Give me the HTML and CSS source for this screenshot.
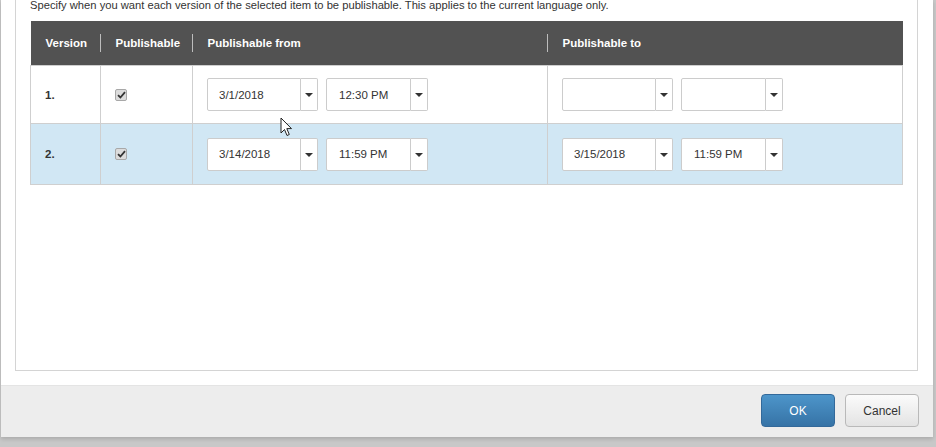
FILE: index.html
```html
<!DOCTYPE html>
<html lang="en">
<head>
    <meta charset="UTF-8">
    <title>Publishing restrictions</title>
    <link rel="stylesheet" href="styles.css">
</head>
<body>
<div class="dialog">
    <div class="dialog-body">
        <div class="panel">
            <p class="intro">Specify when you want each version of the selected item to be publishable. This applies to the current language only.</p>

            <table class="versions">
                <thead>
                <tr>
                    <th class="col-version">Version</th>
                    <th class="col-pub">Publishable</th>
                    <th class="col-from">Publishable from</th>
                    <th class="col-to">Publishable to</th>
                </tr>
                </thead>
                <tbody>
                <tr>
                    <td class="num">1.</td>
                    <td><span class="check"><svg width="9" height="8" viewBox="0 0 9 8"><path d="M1 4.2 L3.4 6.5 L8 1.2" fill="none" stroke="#333" stroke-width="1.8"/></svg></span></td>
                    <td>
                        <div class="pickers">
                            <div class="picker date"><span class="value">3/1/2018</span><span class="drop"></span></div>
                            <div class="picker time"><span class="value">12:30 PM</span><span class="drop"></span></div>
                        </div>
                    </td>
                    <td>
                        <div class="pickers">
                            <div class="picker date"><span class="value"></span><span class="drop"></span></div>
                            <div class="picker time"><span class="value"></span><span class="drop"></span></div>
                        </div>
                    </td>
                </tr>
                <tr class="selected">
                    <td class="num">2.</td>
                    <td><span class="check"><svg width="9" height="8" viewBox="0 0 9 8"><path d="M1 4.2 L3.4 6.5 L8 1.2" fill="none" stroke="#333" stroke-width="1.8"/></svg></span></td>
                    <td>
                        <div class="pickers">
                            <div class="picker date"><span class="value">3/14/2018</span><span class="drop"></span></div>
                            <div class="picker time"><span class="value">11:59 PM</span><span class="drop"></span></div>
                        </div>
                    </td>
                    <td>
                        <div class="pickers">
                            <div class="picker date"><span class="value">3/15/2018</span><span class="drop"></span></div>
                            <div class="picker time"><span class="value">11:59 PM</span><span class="drop"></span></div>
                        </div>
                    </td>
                </tr>
                </tbody>
            </table>
        </div>
    </div>

    <div class="dialog-footer">
        <button class="btn btn-primary">OK</button>
        <button class="btn">Cancel</button>
    </div>
</div>

<svg class="cursor" width="13" height="20" viewBox="0 0 13 20">
    <path d="M1 1 L1 16 L4.5 12.5 L7 18.5 L9.3 17.5 L6.8 11.6 L11.5 11.6 Z" fill="#fff" stroke="#222" stroke-width="1"/>
</svg>
</body>
</html>
```

FILE: styles.css
```css
body {
    margin: 0;
    background: #c8c8c8;
    font-family: 'Liberation Sans', Arial, sans-serif;
    color: #333;
    height: 447px;
    overflow: hidden;
    position: relative;
}

.dialog {
    margin-left: 1px;
    width: 932px;
    height: 437px;
    background: white;
    display: flex;
    flex-direction: column;
    box-shadow: 0 2px 4px rgba(0, 0, 0, 0.15);
}

.dialog-body {
    flex: 1;
    display: flex;
    padding: 0 15px 14px 14px;
}

.panel {
    flex: 1;
    border: 1px solid #d4d4d4;
    border-top: none;
    padding: 0 14px;
}

.intro {
    margin: -1px 0 0 0;
    font-size: 11.2px;
    line-height: 13px;
    color: #333;
}

.versions {
    margin-top: 9px;
    width: 873px;
    border-collapse: collapse;
    table-layout: fixed;
}

.versions th {
    background: #525252;
    color: white;
    height: 44px;
    padding: 0 0 0 15px;
    text-align: left;
    font-size: 11.5px;
    font-weight: bold;
    position: relative;
}

.versions th::after {
    content: "";
    position: absolute;
    right: 0;
    top: 13px;
    height: 18px;
    border-right: 1px solid #bdbdbd;
}

.versions th.col-to::after {
    display: none;
}

.col-version { width: 55px; }
.col-pub { width: 77px; }
.col-from { width: 340px; }

.versions td {
    border: 1px solid #cfcfcf;
    padding: 0 0 0 14px;
    height: 57px;
    font-size: 11.5px;
}

.versions tr.selected td {
    background: #d1e7f4;
    height: 60px;
}

.versions td.num {
    font-weight: bold;
}

.check {
    display: inline-flex;
    align-items: center;
    justify-content: center;
    width: 10px;
    height: 10px;
    border: 1px solid #a8a8a8;
    border-radius: 2px;
    background: #dcdcdc;
    vertical-align: middle;
}

.pickers {
    display: flex;
    gap: 8px;
}

.picker {
    display: flex;
    height: 33px;
}

.picker .value {
    box-sizing: border-box;
    display: flex;
    align-items: center;
    padding-left: 11px;
    background: white;
    border: 1px solid #cccccc;
    border-radius: 2px 0 0 2px;
    color: #333;
    font-size: 11.5px;
}

.picker.date .value { width: 94px; }
.picker.time .value { width: 85px; padding-left: 12px; }

.picker .drop {
    box-sizing: border-box;
    width: 17px;
    background: white;
    border: 1px solid #cccccc;
    border-left: none;
    border-radius: 0 2px 2px 0;
    position: relative;
}

.picker .drop::after {
    content: "";
    position: absolute;
    left: 4px;
    top: 14px;
    border-left: 4px solid transparent;
    border-right: 4px solid transparent;
    border-top: 4px solid #333;
}

.dialog-footer {
    height: 52px;
    box-sizing: border-box;
    background: #ededed;
    border-top: 1px solid #e4e4e4;
    display: flex;
    justify-content: flex-end;
    align-items: flex-start;
    gap: 10px;
    padding: 8px 14px 0 0;
}

.btn {
    width: 74px;
    height: 33px;
    border-radius: 4px;
    border: 1px solid #b9b9b9;
    background: linear-gradient(#fbfbfb, #e3e3e3);
    color: #333;
    font-family: 'Liberation Sans', Arial, sans-serif;
    font-size: 12px;
}

.btn-primary {
    border-color: #33699a;
    background: linear-gradient(#4d95ca, #3673a6);
    color: white;
}

.cursor {
    position: absolute;
    left: 280px;
    top: 117px;
}
```
